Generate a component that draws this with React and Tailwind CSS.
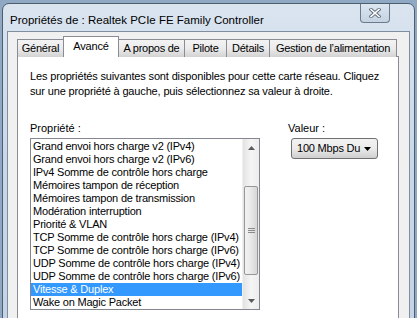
const font = { fontFamily: '"Liberation Sans", Arial, sans-serif' };

const tabs = [
  { label: 'Général', w: 'w-[47px]' },
  { label: 'Avancé', w: 'w-[56px]', active: true },
  { label: 'A propos de', w: 'w-[67px]' },
  { label: 'Pilote', w: 'w-[43px]' },
  { label: 'Détails', w: 'w-[44px]' },
  { label: 'Gestion de l\u2019alimentation', w: 'w-[128px]' },
];

const items = [
  'Grand envoi hors charge v2 (IPv4)',
  'Grand envoi hors charge v2 (IPv6)',
  'IPv4 Somme de contrôle hors charge',
  'Mémoires tampon de réception',
  'Mémoires tampon de transmission',
  'Modération interruption',
  'Priorité & VLAN',
  'TCP Somme de contrôle hors charge (IPv4)',
  'TCP Somme de contrôle hors charge (IPv6)',
  'UDP Somme de contrôle hors charge (IPv4)',
  'UDP Somme de contrôle hors charge (IPv6)',
  'Vitesse & Duplex',
  'Wake on Magic Packet',
];

function CloseGlyph() {
  return (
    <svg width="12" height="10" viewBox="0 0 12 10">
      <path d="M2 1.5 L10 8.5 M10 1.5 L2 8.5" stroke="#5f6b78" strokeWidth="3.4" strokeLinecap="square" />
      <path d="M2 1.5 L10 8.5 M10 1.5 L2 8.5" stroke="#ffffff" strokeWidth="1.6" strokeLinecap="square" />
    </svg>
  );
}

function Scrollbar() {
  return (
    <div className="w-[17px] h-full flex flex-col bg-gradient-to-r from-[#e3e3e3] via-[#f5f5f5] to-[#ececec] border-l border-[#f0f0f0]">
      <div className="h-[17px] flex items-center justify-center">
        <svg width="7" height="4" viewBox="0 0 7 4"><path d="M0 4 L3.5 0 L7 4 Z" fill="#5a5a5a" /></svg>
      </div>
      <div className="h-[30px]" />
      <div className="mx-px h-[89px] rounded-[2px] border border-[#979797] bg-gradient-to-r from-[#f3f3f3] via-[#e8e8e8] to-[#d6d6d6] flex items-center justify-center">
        <div className="flex flex-col gap-[1px]">
          <div className="w-[7px] h-px bg-[#8a8a8a]" />
          <div className="w-[7px] h-px bg-[#8a8a8a]" />
          <div className="w-[7px] h-px bg-[#8a8a8a]" />
        </div>
      </div>
      <div className="flex-1" />
      <div className="h-[17px] flex items-center justify-center">
        <svg width="7" height="4" viewBox="0 0 7 4"><path d="M0 0 L7 0 L3.5 4 Z" fill="#5a5a5a" /></svg>
      </div>
    </div>
  );
}

export default function App() {
  return (
    <div className="w-[417px] h-[318px] overflow-hidden bg-[#8fa9c4] pl-[2px] pt-[3px]" style={font}>
      <div className="w-[413px] h-[320px] rounded-t-[7px] border border-[#4f5e6e] bg-gradient-to-b from-[#d9e4ef] via-[#c9d8e8] to-[#c3d4e6] flex flex-col">
        {/* Title bar */}
        <div className="h-[27px] flex items-start justify-between shrink-0">
          <span className="pl-[7px] pt-[9px] text-[11.5px] leading-[14px] text-black whitespace-nowrap">
            Propriétés de : Realtek PCIe FE Family Controller
          </span>
          <div className="mr-[24px] w-[30px] h-[19px] rounded-b-[4px] border border-t-0 border-[#6d7a89] bg-gradient-to-b from-[#dce6f0] to-[#c4d3e3] flex items-center justify-center">
            <CloseGlyph />
          </div>
        </div>

        {/* Client area */}
        <div className="mx-[4px] flex-1 border border-[#7f8fa0] bg-[#f0f0f0] pl-[9px] pr-[7px] pt-[4px]">
          <div className="flex items-end h-[21px]">
            {tabs.map((t, i) =>
              t.active ? (
                <div
                  key={t.label}
                  className={`${t.w} -ml-px h-[21px] relative z-10 border border-b-0 border-[#898c95] bg-white flex items-center justify-center pb-[2px] text-[11px] tracking-[-0.2px] whitespace-nowrap text-black`}
                >
                  {t.label}
                </div>
              ) : (
                <div
                  key={t.label}
                  className={`${t.w} ${i === 0 ? '' : '-ml-px'} h-[18px] border border-b-0 border-[#898c95] bg-gradient-to-b from-[#f3f3f3] via-[#ebebeb] to-[#d3d3d3] flex items-center justify-center text-[11px] tracking-[-0.25px] whitespace-nowrap text-black`}
                >
                  {t.label}
                </div>
              )
            )}
          </div>

          {/* Tab page */}
          <div className="-mt-px w-[382px] h-[280px] border border-[#898c95] bg-white pl-[12px] pt-[12px]">
            <p className="text-[11px] leading-[15px] text-black tracking-[-0.15px] whitespace-nowrap">
              Les propriétés suivantes sont disponibles pour cette carte réseau. Cliquez
              <br />
              sur une propriété à gauche, puis sélectionnez sa valeur à droite.
            </p>

            <div className="mt-[22px] flex">
              <div className="w-[230px]">
                <div className="text-[11px] leading-[14px] text-black">Propriété :</div>
                <div className="mt-[3px] w-[230px] h-[172px] border border-[#828790] bg-white flex">
                  <div className="flex-1 pt-px overflow-hidden">
                    {items.map((it, i) => (
                      <div
                        key={it}
                        className={`h-[13px] pl-[2px] text-[11px] leading-[13px] whitespace-nowrap tracking-[-0.2px] ${
                          i === 11 ? 'bg-[#3399ff] text-white' : 'text-black'
                        }`}
                      >
                        {it}
                      </div>
                    ))}
                  </div>
                  <Scrollbar />
                </div>
              </div>

              <div className="ml-[28px]">
                <div className="text-[11px] leading-[14px] text-black">Valeur :</div>
                <div className="mt-[3px] ml-[3px] w-[87px] h-[21px] rounded-[3px] border border-[#707070] bg-gradient-to-b from-[#f2f2f2] via-[#ebebeb] to-[#cfcfcf] flex items-center justify-between pl-[5px] pr-[6px]">
                  <span className="text-[11px] tracking-[-0.2px] whitespace-nowrap text-black">100 Mbps Du</span>
                  <svg width="7" height="4" viewBox="0 0 7 4"><path d="M0 0 L7 0 L3.5 4 Z" fill="#000" /></svg>
                </div>
              </div>
            </div>
          </div>
        </div>
      </div>
    </div>
  );
}
